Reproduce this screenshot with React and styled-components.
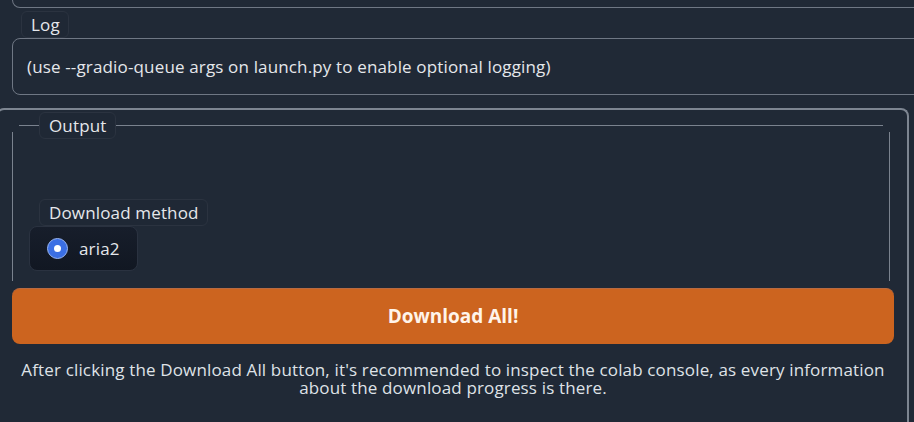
import styled, { createGlobalStyle } from "styled-components";

const GlobalStyle = createGlobalStyle`
  html, body {
    margin: 0;
    padding: 0;
    background: #202936;
    overflow: hidden;
  }
  body {
    font-family: "Open Sans", "Noto Sans", sans-serif;
    color: #e5e7eb;
    letter-spacing: 0.15px;
  }
`;

const Page = styled.div`
  width: 914px;
  height: 422px;
  overflow: hidden;
`;

const TopStub = styled.div`
  height: 7px;
  margin: 0 -20px 0 12px;
  border: 1px solid #6f7784;
  border-top: none;
  border-radius: 0 0 8px 8px;
`;

const LogBlock = styled.div`
  display: flex;
  flex-direction: column;
  align-items: flex-start;
  margin: 2px -20px 0 12px;
`;

const Label = styled.span`
  display: inline-flex;
  align-items: center;
  height: 25px;
  padding: 0 8px 0 9px;
  font-size: 17px;
  color: #e5e7eb;
  background: #1f2835;
  border: 1px solid #2b3340;
  border-radius: 6px;
  margin-left: ${(p) => p.$indent || 0}px;
  margin-top: ${(p) => p.$top || 0}px;
`;

const LogBox = styled.div`
  align-self: stretch;
  display: flex;
  align-items: center;
  height: 55px;
  padding: 0 14px;
  border: 1px solid #6f7784;
  border-radius: 8px;
  font-size: 17px;
  color: #e5e7eb;
`;

const Panel = styled.div`
  margin: 13px 0 0 -4px;
  width: 913px;
  height: 320px;
  box-sizing: border-box;
  border: 2px solid #7d8591;
  border-bottom: none;
  border-radius: 8px 8px 0 0;
  padding: 0 17px 0 14px;
`;

const ScrollArea = styled.div`
  height: 171px;
  overflow: hidden;
  padding-top: 15px;
  box-sizing: border-box;
`;

const line = "#7a828e";

const Fieldset = styled.div`
  display: flex;
  flex-direction: column;
  align-items: flex-start;
  height: 240px;
  background:
    linear-gradient(${line}, ${line}) 7px 0 / calc(100% - 14px) 1px no-repeat,
    linear-gradient(${line}, ${line}) 0 7px / 1px 100% no-repeat,
    linear-gradient(${line}, ${line}) right 0 top 7px / 1px 100% no-repeat;
`;

const RadioCard = styled.label`
  display: flex;
  align-items: center;
  gap: 11px;
  margin-left: 17px;
  height: 43px;
  padding: 0 17px 0 17px;
  border: 1px solid #2a3240;
  border-radius: 8px;
  background: linear-gradient(180deg, #171e2b, #111722);
  font-size: 17px;
  color: #e5e7eb;
`;

const RadioDot = styled.span`
  width: 19px;
  height: 19px;
  border-radius: 50%;
  background: #3b6fe4;
  border: 1.5px solid #9ab7f3;
  display: flex;
  align-items: center;
  justify-content: center;
  &::after {
    content: "";
    width: 7px;
    height: 7px;
    border-radius: 50%;
    background: #ffffff;
  }
`;

const DownloadButton = styled.button`
  display: block;
  width: 882px;
  height: 56px;
  margin-top: 7px;
  border: none;
  border-top: 1px solid #b86a42;
  border-radius: 8px;
  background: #cc641f;
  color: #fff4ea;
  font-family: "Open Sans", "Noto Sans", sans-serif;
  font-size: 19px;
  font-weight: 700;
  padding-bottom: 2px;
  cursor: pointer;
`;

const Note = styled.p`
  margin: 17px 0 0;
  width: 882px;
  text-align: center;
  font-size: 17px;
  line-height: 18px;
  color: #dfe2e7;
  white-space: nowrap;
`;

export default function App() {
  return (
    <Page>
      <GlobalStyle />
      <TopStub />
      <LogBlock>
        <Label $indent={9} $top={1}>Log</Label>
        <LogBox>(use --gradio-queue args on launch.py to enable optional logging)</LogBox>
      </LogBlock>
      <Panel>
        <ScrollArea>
          <Fieldset>
            <Label $indent={27} $top={-13}>Output</Label>
            <Label $indent={27} $top={60}>Download method</Label>
            <RadioCard>
              <RadioDot />
              aria2
            </RadioCard>
          </Fieldset>
        </ScrollArea>
        <DownloadButton>Download All!</DownloadButton>
        <Note>
          After clicking the Download All button, it's recommended to inspect the colab console, as every information
          <br />
          about the download progress is there.
        </Note>
      </Panel>
    </Page>
  );
}
